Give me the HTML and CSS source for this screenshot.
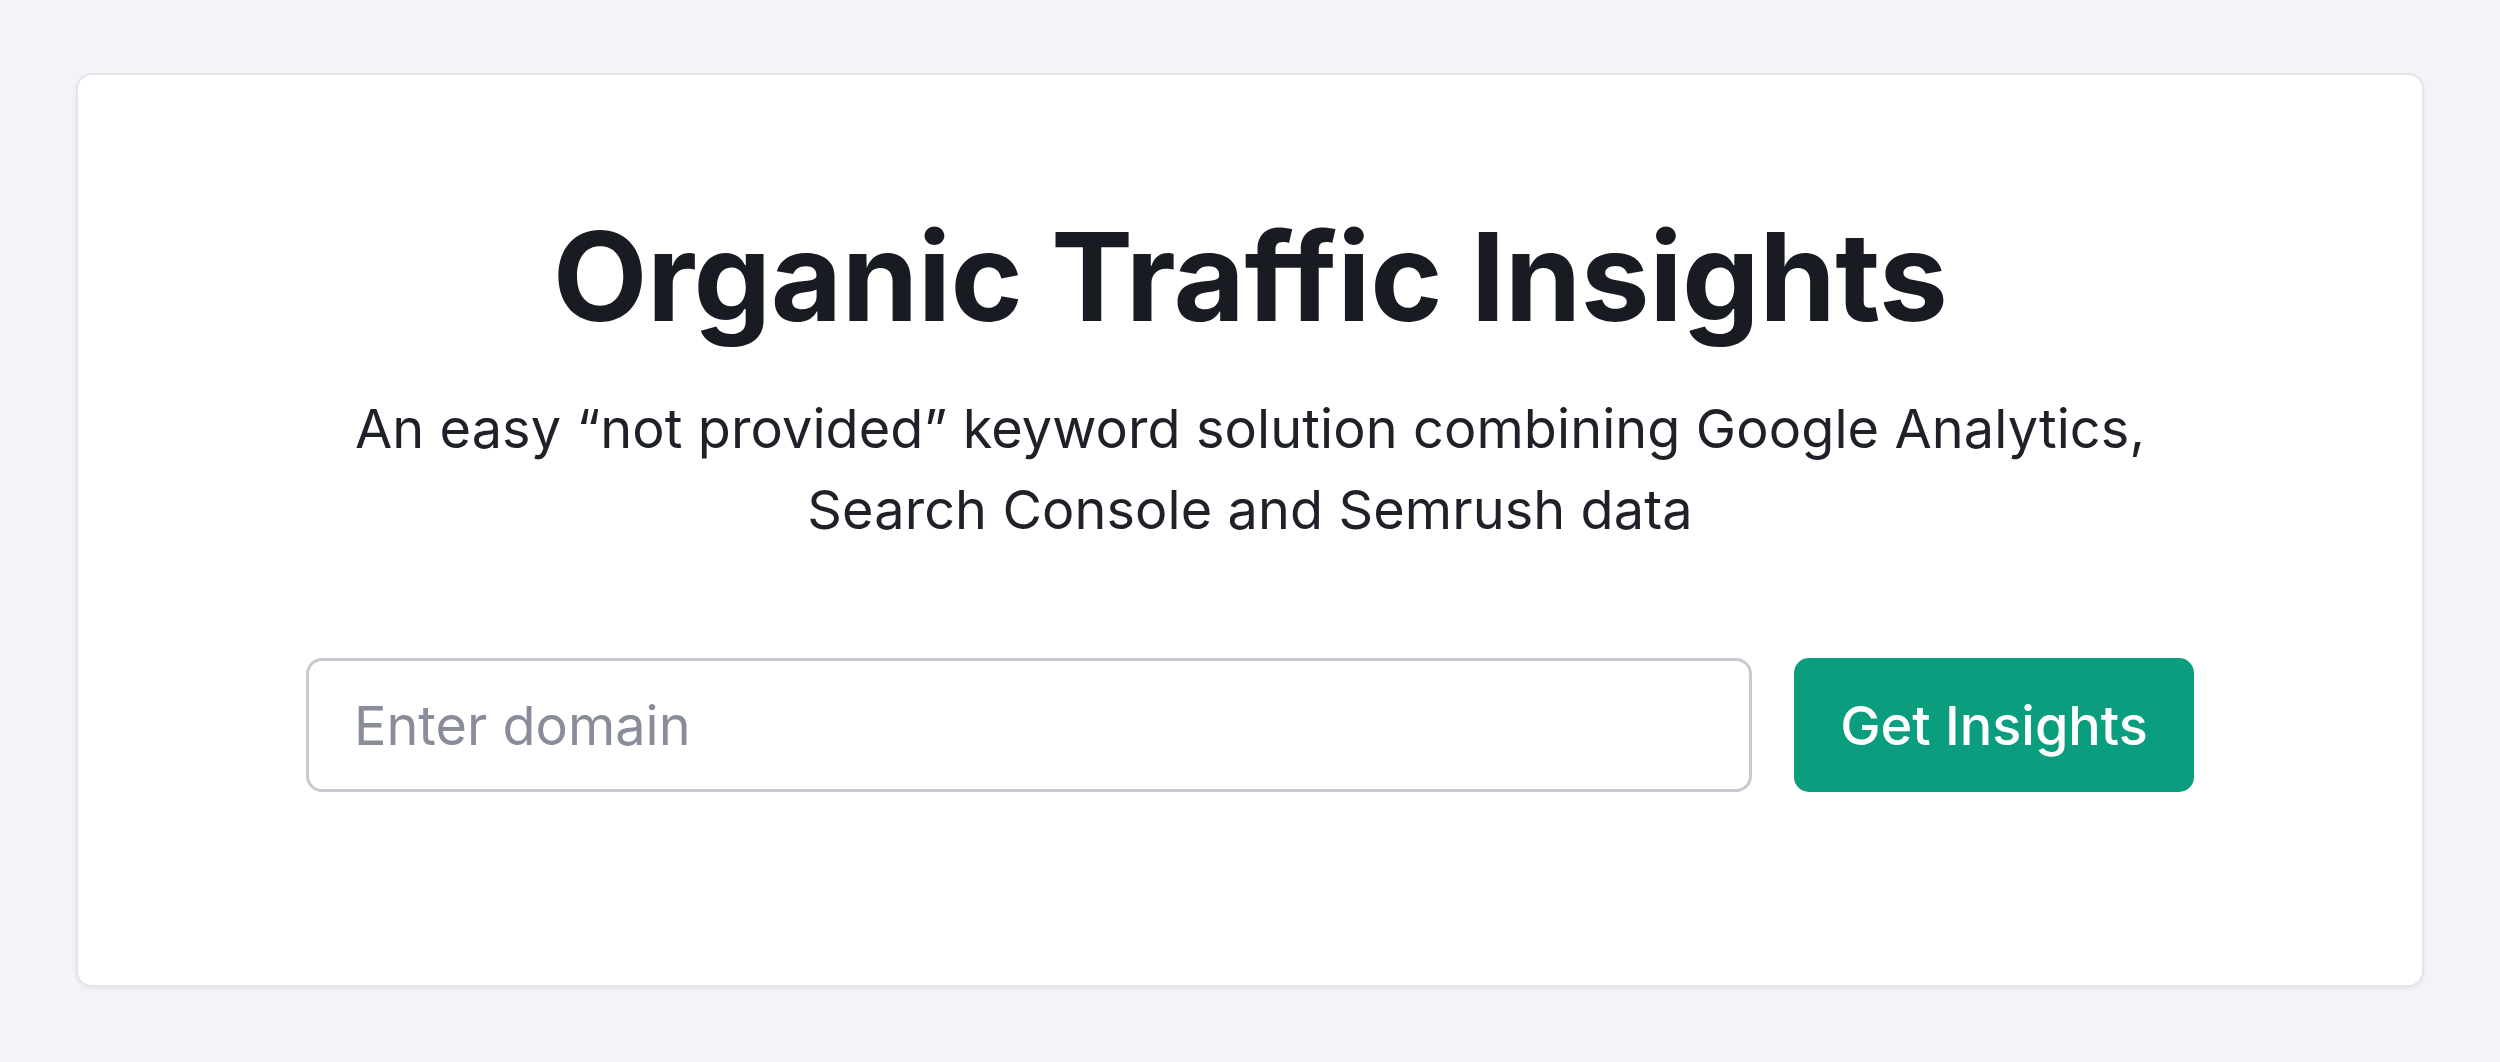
FILE: index.html
```html
<!DOCTYPE html>
<html lang="en">
<head>
  <meta charset="UTF-8">
  <meta name="viewport" content="width=device-width, initial-scale=1.0">
  <title>Organic Traffic Insights</title>
  <link rel="stylesheet" href="styles.css">
</head>
<body>
  <div class="page">
    <div class="card">
      <h1 class="title">Organic Traffic Insights</h1>
      <p class="subtitle">An easy “not provided” keyword solution combining Google Analytics, Search Console and Semrush data</p>

      <form class="search-form" onsubmit="return false;">
        <input class="domain-input" type="text" placeholder="Enter domain">
        <button class="submit-btn" type="submit">Get Insights</button>
      </form>
    </div>
  </div>
</body>
</html>
```

FILE: styles.css
```css
* {
  margin: 0;
  padding: 0;
  box-sizing: border-box;
}

body {
  font-family: Inter, 'Noto Sans', sans-serif;
  background: #f3f4f8;
  color: #1b1d24;
  -webkit-font-smoothing: antialiased;
}

.page {
  padding: 73px 76px;
}

.card {
  background: #ffffff;
  border: 2px solid #e4e5ea;
  border-radius: 16px;
  box-shadow: 0 2px 4px rgba(30, 35, 60, 0.07);
  padding: 128px 40px 193px;
  display: flex;
  flex-direction: column;
  align-items: center;
}

.title {
  font-size: 123px;
  line-height: 148px;
  font-weight: 700;
  letter-spacing: -0.5px;
  color: #191b22;
  text-align: center;
}

.subtitle {
  margin-top: 37px;
  max-width: 1888px;
  font-size: 54px;
  line-height: 81px;
  font-weight: 400;
  letter-spacing: 0.1px;
  color: #1f2129;
  text-align: center;
}

.search-form {
  margin-top: 108px;
  width: 1888px;
  display: flex;
  gap: 42px;
}

.domain-input {
  flex: 1;
  height: 134px;
  padding: 0 45px;
  border: 3px solid #c7c9d1;
  border-radius: 16px;
  font-family: inherit;
  font-size: 54px;
  color: #1b1d24;
  background: #ffffff;
  outline: none;
}

.domain-input::placeholder {
  color: #898d9a;
}

.submit-btn {
  width: 400px;
  height: 134px;
  border: none;
  border-radius: 15px;
  background: #0a9e7f;
  color: #ffffff;
  font-family: inherit;
  font-size: 54px;
  font-weight: 500;
  cursor: pointer;
}
```
